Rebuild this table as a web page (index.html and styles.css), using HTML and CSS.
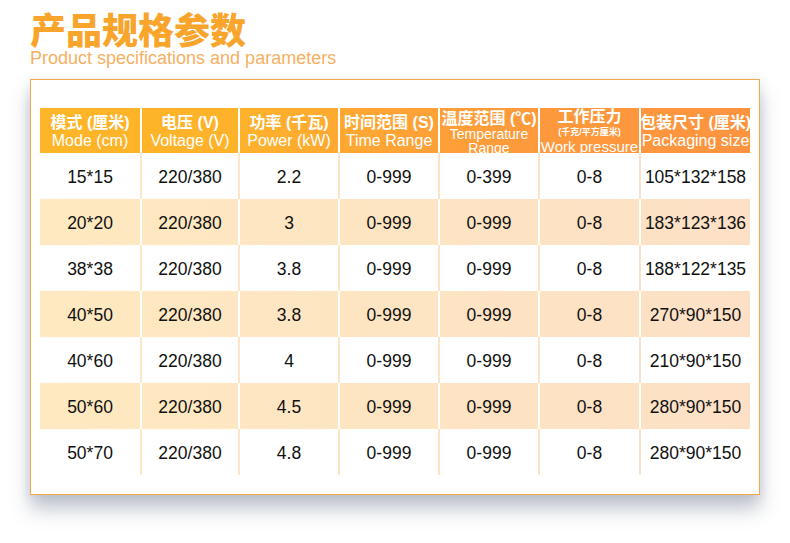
FILE: index.html
```html
<!DOCTYPE html>
<html lang="zh">
<head>
<meta charset="utf-8">
<title>产品规格参数</title>
<link rel="stylesheet" href="styles.css">
</head>
<body>
<header class="heading">
  <h1 class="title">产品规格参数</h1>
  <p class="subtitle">Product specifications and parameters</p>
</header>
<section class="panel">
  <div class="table">
    <div class="row head">
      <div class="cell"><span class="zh">模式 (厘米)</span><span class="en">Mode (cm)</span></div>
      <div class="cell"><span class="zh">电压 (V)</span><span class="en">Voltage (V)</span></div>
      <div class="cell"><span class="zh">功率 (千瓦)</span><span class="en">Power (kW)</span></div>
      <div class="cell"><span class="zh">时间范围 (S)</span><span class="en">Time Range</span></div>
      <div class="cell temp"><span class="zh">温度范围 (℃)</span><span class="en sm">Temperature</span><span class="en sm">Range</span></div>
      <div class="cell press"><span class="zh">工作压力</span><span class="tiny">(千克/平方厘米)</span><span class="en md">Work pressure</span></div>
      <div class="cell"><span class="zh">包装尺寸 (厘米)</span><span class="en">Packaging size</span></div>
    </div>
    <div class="row plain">
      <div class="cell">15*15</div><div class="cell">220/380</div><div class="cell">2.2</div><div class="cell">0-999</div><div class="cell">0-399</div><div class="cell">0-8</div><div class="cell">105*132*158</div>
    </div>
    <div class="row shade">
      <div class="cell">20*20</div><div class="cell">220/380</div><div class="cell">3</div><div class="cell">0-999</div><div class="cell">0-999</div><div class="cell">0-8</div><div class="cell">183*123*136</div>
    </div>
    <div class="row plain">
      <div class="cell">38*38</div><div class="cell">220/380</div><div class="cell">3.8</div><div class="cell">0-999</div><div class="cell">0-999</div><div class="cell">0-8</div><div class="cell">188*122*135</div>
    </div>
    <div class="row shade">
      <div class="cell">40*50</div><div class="cell">220/380</div><div class="cell">3.8</div><div class="cell">0-999</div><div class="cell">0-999</div><div class="cell">0-8</div><div class="cell">270*90*150</div>
    </div>
    <div class="row plain">
      <div class="cell">40*60</div><div class="cell">220/380</div><div class="cell">4</div><div class="cell">0-999</div><div class="cell">0-999</div><div class="cell">0-8</div><div class="cell">210*90*150</div>
    </div>
    <div class="row shade">
      <div class="cell">50*60</div><div class="cell">220/380</div><div class="cell">4.5</div><div class="cell">0-999</div><div class="cell">0-999</div><div class="cell">0-8</div><div class="cell">280*90*150</div>
    </div>
    <div class="row plain">
      <div class="cell">50*70</div><div class="cell">220/380</div><div class="cell">4.8</div><div class="cell">0-999</div><div class="cell">0-999</div><div class="cell">0-8</div><div class="cell">280*90*150</div>
    </div>
  </div>
</section>
</body>
</html>
```
FILE: styles.css
```css
html, body {
  margin: 0;
  padding: 0;
  background: #ffffff;
}
body {
  font-family: "Liberation Sans", "Noto Sans CJK SC", sans-serif;
  width: 790px;
  height: 543px;
  overflow: hidden;
}
.heading {
  padding-left: 30px;
  padding-top: 10px;
}
.title {
  margin: 0;
  font-family: "Noto Sans CJK SC", sans-serif;
  font-weight: 900;
  font-size: 36px;
  line-height: 36px;
  height: 38px;
  color: #f9a52c;
}
.subtitle {
  margin: 0;
  font-size: 18px;
  line-height: 20px;
  color: #f6b062;
}
.panel {
  margin: 11px 0 0 30px;
  width: 719px;
  height: 386px;
  border: 1px solid #f3a84c;
  background: #fff;
  box-shadow: 0 14px 18px rgba(70, 85, 110, 0.34), 0 2px 10px rgba(70, 85, 110, 0.1);
  padding: 28px 0 0 9px;
}
.table {
  width: 710px;
}
.row {
  display: grid;
  grid-template-columns: 100px 98px 100px 100px 100px 101px 111px;
  height: 46px;
}
.cell {
  display: flex;
  align-items: center;
  justify-content: center;
  overflow: hidden;
  white-space: nowrap;
  font-size: 17.5px;
  color: #111;
  padding-top: 3px;
  box-sizing: border-box;
}
.cell + .cell {
  border-left: 2px solid transparent;
}
.row.plain {
  background: linear-gradient(90deg, #fde9c3, #fde4c4 50%, #fde0c8);
}
.row.plain .cell {
  background: #fff;
  background-clip: padding-box;
}
.row.shade {
  background: linear-gradient(90deg, #fee9c0, #fde5c2 45%, #fde0c6);
}
.row.shade .cell + .cell {
  border-left-color: #fff;
}
.row.head {
  height: 45px;
  background: linear-gradient(90deg, #feb527 0%, #feb22a 28%, #fea236 52%, #fd9a3c 68%, #fd933f 100%);
}
.row.head .cell + .cell {
  border-left-color: #fff;
}
.row.head .cell {
  flex-direction: column;
  justify-content: flex-start;
  padding-top: 6px;
  color: #fff;
}
.zh {
  font-weight: bold;
  font-size: 16px;
  line-height: 18px;
}
.en {
  font-size: 16px;
  line-height: 18px;
}
.row.head .cell.temp {
  padding-top: 2px;
}
.cell.temp .zh {
  line-height: 17px;
}
.en.sm {
  font-size: 14px;
  line-height: 14px;
}
.row.head .cell.press {
  padding-top: 1px;
}
.cell.press .zh {
  line-height: 16px;
}
.tiny {
  font-weight: bold;
  font-size: 9px;
  line-height: 14px;
}
.en.md {
  font-size: 15px;
  line-height: 16px;
}
```
